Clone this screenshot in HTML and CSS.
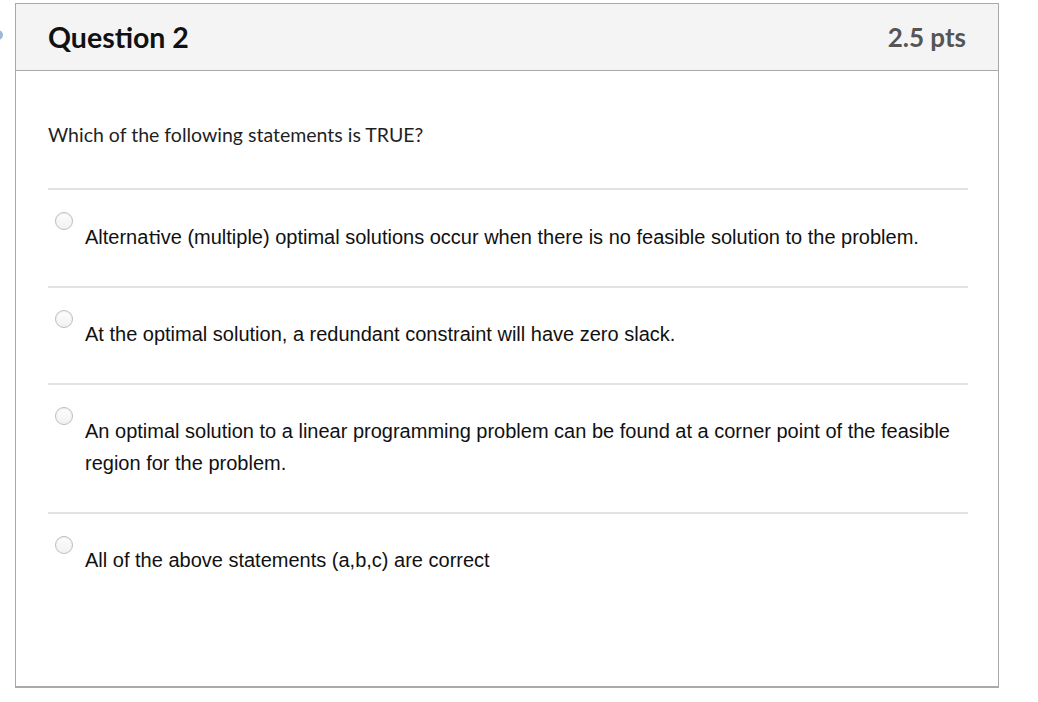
FILE: index.html
```html
<!DOCTYPE html>
<html>
<head>
<meta charset="utf-8">
<link rel="stylesheet" href="styles.css">
</head>
<body>
<span class="edge-dot"></span>
<div class="card">
  <div class="card-header">
    <h2 class="title">Question 2</h2>
    <span class="pts">2.5 pts</span>
  </div>
  <div class="card-body">
    <p class="question">Which of the following statements is TRUE?</p>
    <div class="answers">
      <div class="answer">
        <span class="radio"></span>
        <div class="label">Alterna<span class="lig">ti</span>ve (multiple) optimal solutions occur when there is no feasible solution to the problem.</div>
      </div>
      <div class="answer">
        <span class="radio"></span>
        <div class="label">At the optimal solution, a redundant constraint will have zero slack.</div>
      </div>
      <div class="answer">
        <span class="radio"></span>
        <div class="label">An optimal solution to a linear programming problem can be found at a corner point of the feasible region for the problem.</div>
      </div>
      <div class="answer last">
        <span class="radio"></span>
        <div class="label">All of the above statements (a,b,c) are correct</div>
      </div>
    </div>
  </div>
</div>
</body>
</html>
```

FILE: styles.css
```css
html, body {
  margin: 0;
  padding: 0;
  background: #ffffff;
}
body {
  padding: 3px 0 0 15px;
  font-family: "Lato", "Liberation Sans", sans-serif;
  color: #1f1f1f;
  position: relative;
}
.edge-dot {
  position: absolute;
  left: -7px;
  top: 30px;
  width: 10px;
  height: 10px;
  border-radius: 50%;
  background: #9db7d6;
}
.card {
  width: 984px;
  height: 685px;
  border: 1px solid #a9a9a9;
  border-bottom-width: 2px;
  box-sizing: border-box;
  display: flex;
  flex-direction: column;
}
.card-header {
  height: 67px;
  box-sizing: border-box;
  background: #f4f4f4;
  border-bottom: 1px solid #a9a9a9;
  display: flex;
  align-items: center;
  justify-content: space-between;
  padding: 0 32px 0 32px;
}
.title {
  margin: 0;
  font-size: 28.5px;
  font-weight: 700;
  color: #111;
}
.pts {
  font-size: 26px;
  font-weight: 700;
  color: #555;
}
.card-body {
  padding: 0 30px 0 32px;
}
.question {
  margin: 0;
  padding: 52px 0 41px;
  font-size: 19.5px;
  line-height: 24px;
  color: #1f1f1f;
}
.answer {
  display: flex;
  border-top: 2px solid #e2e2e2;
  padding: 22px 0 33px 7px;
}
.answer.last {
  padding-bottom: 0;
}
.radio {
  flex: none;
  width: 18px;
  height: 18px;
  box-sizing: border-box;
  border-radius: 50%;
  border: 1px solid #bdbdbd;
  background: linear-gradient(#fdfdfd, #f1f1f1);
  box-shadow: inset 0 1px 1px rgba(0,0,0,0.06);
  margin-right: 12px;
}
.label {
  margin-top: 8px;
  font-family: "Liberation Sans", Arial, sans-serif;
  font-size: 20px;
  line-height: 32px;
  color: #111;
}
.lig {
  font-family: "Lato", sans-serif;
}
```
